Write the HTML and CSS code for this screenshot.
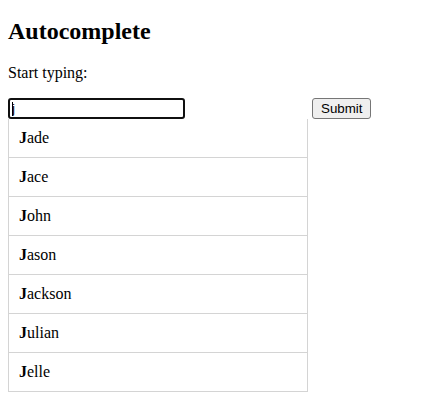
FILE: index.html
```html
<!DOCTYPE html>
<html>
<head>
<meta charset="utf-8">
<link rel="stylesheet" href="styles.css">
</head>
<body>
<h2 class="title">Autocomplete</h2>
<p class="lead">Start typing:</p>
<form class="form" autocomplete="off">
  <div class="autocomplete">
    <div class="field-wrap">
      <input class="field" type="text" value="j">
      <span class="caret"></span>
    </div>
    <div class="items">
      <div class="item"><strong>J</strong>ade</div>
      <div class="item"><strong>J</strong>ace</div>
      <div class="item"><strong>J</strong>ohn</div>
      <div class="item"><strong>J</strong>ason</div>
      <div class="item"><strong>J</strong>ackson</div>
      <div class="item"><strong>J</strong>ulian</div>
      <div class="item"><strong>J</strong>elle</div>
    </div>
  </div>
  <input class="submit" type="submit" value="Submit">
</form>
</body>
</html>
```
FILE: styles.css
```css
html, body {
  background: #fff;
}
body {
  margin: 0;
  padding: 0 8px;
  font-family: "Liberation Serif", "Times New Roman", serif;
  font-size: 16px;
  color: #000;
}
.title {
  font-size: 24px;
  font-weight: bold;
  line-height: 28px;
  margin: 17px 0 19px;
}
.lead {
  margin: 0 0 16px;
  line-height: 18px;
}
.form {
  margin: 0;
  display: flex;
  align-items: flex-start;
  gap: 4px;
}
.autocomplete {
  width: 300px;
  display: flex;
  flex-direction: column;
}
.field-wrap {
  position: relative;
  width: 177px;
  height: 21px;
}
.field {
  display: block;
  box-sizing: border-box;
  width: 177px;
  height: 21px;
  margin: 0;
  font-family: "Liberation Sans", Arial, sans-serif;
  font-size: 13.33px;
  padding: 1px 2px;
  border: 2px solid #101010;
  border-radius: 3px;
  outline: none;
  background: #fff;
  color: #000;
}
.caret {
  position: absolute;
  left: 4px;
  top: 4px;
  width: 1px;
  height: 14px;
  background: #000;
}
.items {
  border: 1px solid #d4d4d4;
  border-top: none;
  border-bottom: none;
}
.item {
  padding: 10px;
  background: #fff;
  border-bottom: 1px solid #d4d4d4;
  line-height: 18px;
}
.submit {
  box-sizing: border-box;
  height: 21px;
  margin: 0;
  font-family: "Liberation Sans", Arial, sans-serif;
  font-size: 13.33px;
  padding: 1px 8px;
  border: 1px solid #767676;
  border-radius: 3px;
  background: #efefef;
  color: #000;
}
```
